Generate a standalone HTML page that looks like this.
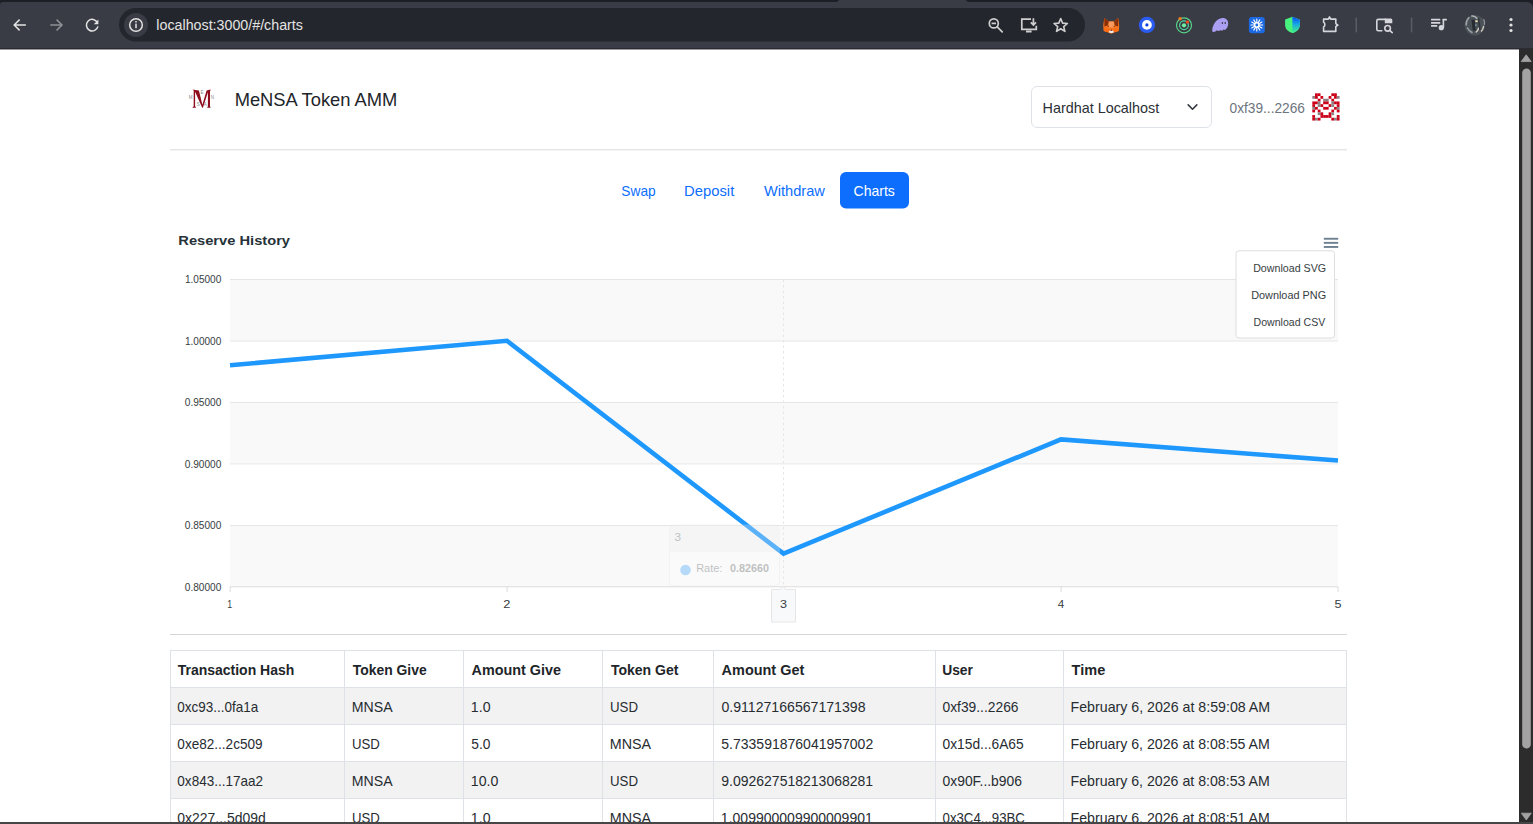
<!DOCTYPE html>
<html><head><meta charset="utf-8">
<style>
*{margin:0;padding:0;box-sizing:border-box}
html,body{width:1533px;height:824px;overflow:hidden;background:#fff;font-family:"Liberation Sans",sans-serif}
svg{position:absolute;left:0;top:0;display:block}
text{font-family:"Liberation Sans",sans-serif}
</style></head><body>
<svg width="1533" height="824" viewBox="0 0 1533 824">
<!-- ===== page ===== -->
<!-- logo -->
<path d="M192.3 89.5L198.9 90.6L202.4 104.8L206.6 90.6L210.5 89.5L210.5 90.6L210 91L210 106.4L210.6 107.2L210.6 107.8L207.2 107.8L207.2 107.2L207.9 106.4L207.9 92.3L202.9 107.8L202.2 107.8L195.1 91.8L195.1 106.3L195.9 107.2L195.9 107.8L192.6 107.8L192.6 107.2L193.7 106.3L193.7 90.6Z" fill="#8e0c1e"/>
<g style="font-family:'Liberation Serif',serif" font-size="4.5" fill="#8a8a8a">
 <text x="188.8" y="98.5">M</text><text x="200.6" y="94">E</text><text x="210.8" y="98.5">N</text><text x="196.8" y="106.3">S</text><text x="203.8" y="106.3">A</text>
</g>
<!-- select -->
<rect x="1031.5" y="86.5" width="180" height="41" rx="5.5" fill="#fff" stroke="#dee2e6"/>
<path d="M1188.2 104.9l4.3 4.3 4.3-4.3" stroke="#343a40" stroke-width="1.6" fill="none" stroke-linecap="round" stroke-linejoin="round"/>
<rect x="1315.02" y="93.30" width="2.77" height="2.77" fill="#cc0018"/>
<rect x="1317.74" y="93.30" width="2.77" height="2.77" fill="#cc0018"/>
<rect x="1331.34" y="93.30" width="2.77" height="2.77" fill="#cc0018"/>
<rect x="1334.06" y="93.30" width="2.77" height="2.77" fill="#cc0018"/>
<rect x="1312.30" y="96.02" width="2.77" height="2.77" fill="#8e7f82"/>
<rect x="1315.02" y="96.02" width="2.77" height="2.77" fill="#cc0018"/>
<rect x="1320.46" y="96.02" width="2.77" height="2.77" fill="#cc0018"/>
<rect x="1328.62" y="96.02" width="2.77" height="2.77" fill="#cc0018"/>
<rect x="1334.06" y="96.02" width="2.77" height="2.77" fill="#cc0018"/>
<rect x="1336.78" y="96.02" width="2.77" height="2.77" fill="#8e7f82"/>
<rect x="1317.74" y="98.74" width="2.77" height="2.77" fill="#cc0018"/>
<rect x="1323.18" y="98.74" width="2.77" height="2.77" fill="#8e7f82"/>
<rect x="1325.90" y="98.74" width="2.77" height="2.77" fill="#8e7f82"/>
<rect x="1331.34" y="98.74" width="2.77" height="2.77" fill="#cc0018"/>
<rect x="1312.30" y="101.46" width="2.77" height="2.77" fill="#cc0018"/>
<rect x="1315.02" y="101.46" width="2.77" height="2.77" fill="#cc0018"/>
<rect x="1317.74" y="101.46" width="2.77" height="2.77" fill="#8e7f82"/>
<rect x="1323.18" y="101.46" width="2.77" height="2.77" fill="#cc0018"/>
<rect x="1325.90" y="101.46" width="2.77" height="2.77" fill="#cc0018"/>
<rect x="1331.34" y="101.46" width="2.77" height="2.77" fill="#8e7f82"/>
<rect x="1334.06" y="101.46" width="2.77" height="2.77" fill="#cc0018"/>
<rect x="1336.78" y="101.46" width="2.77" height="2.77" fill="#cc0018"/>
<rect x="1312.30" y="104.18" width="2.77" height="2.77" fill="#cc0018"/>
<rect x="1317.74" y="104.18" width="2.77" height="2.77" fill="#8e7f82"/>
<rect x="1320.46" y="104.18" width="2.77" height="2.77" fill="#cc0018"/>
<rect x="1328.62" y="104.18" width="2.77" height="2.77" fill="#cc0018"/>
<rect x="1331.34" y="104.18" width="2.77" height="2.77" fill="#8e7f82"/>
<rect x="1336.78" y="104.18" width="2.77" height="2.77" fill="#cc0018"/>
<rect x="1312.30" y="106.90" width="2.77" height="2.77" fill="#8e7f82"/>
<rect x="1315.02" y="106.90" width="2.77" height="2.77" fill="#cc0018"/>
<rect x="1323.18" y="106.90" width="2.77" height="2.77" fill="#cc0018"/>
<rect x="1325.90" y="106.90" width="2.77" height="2.77" fill="#cc0018"/>
<rect x="1334.06" y="106.90" width="2.77" height="2.77" fill="#cc0018"/>
<rect x="1336.78" y="106.90" width="2.77" height="2.77" fill="#8e7f82"/>
<rect x="1312.30" y="109.62" width="2.77" height="2.77" fill="#cc0018"/>
<rect x="1317.74" y="109.62" width="2.77" height="2.77" fill="#cc0018"/>
<rect x="1331.34" y="109.62" width="2.77" height="2.77" fill="#cc0018"/>
<rect x="1336.78" y="109.62" width="2.77" height="2.77" fill="#cc0018"/>
<rect x="1317.74" y="112.34" width="2.77" height="2.77" fill="#8e7f82"/>
<rect x="1320.46" y="112.34" width="2.77" height="2.77" fill="#cc0018"/>
<rect x="1328.62" y="112.34" width="2.77" height="2.77" fill="#cc0018"/>
<rect x="1331.34" y="112.34" width="2.77" height="2.77" fill="#8e7f82"/>
<rect x="1312.30" y="115.06" width="2.77" height="2.77" fill="#cc0018"/>
<rect x="1320.46" y="115.06" width="2.77" height="2.77" fill="#cc0018"/>
<rect x="1323.18" y="115.06" width="2.77" height="2.77" fill="#cc0018"/>
<rect x="1325.90" y="115.06" width="2.77" height="2.77" fill="#cc0018"/>
<rect x="1328.62" y="115.06" width="2.77" height="2.77" fill="#cc0018"/>
<rect x="1336.78" y="115.06" width="2.77" height="2.77" fill="#cc0018"/>
<rect x="1312.30" y="117.78" width="2.77" height="2.77" fill="#cc0018"/>
<rect x="1315.02" y="117.78" width="2.77" height="2.77" fill="#8e7f82"/>
<rect x="1317.74" y="117.78" width="2.77" height="2.77" fill="#cc0018"/>
<rect x="1331.34" y="117.78" width="2.77" height="2.77" fill="#cc0018"/>
<rect x="1334.06" y="117.78" width="2.77" height="2.77" fill="#8e7f82"/>
<rect x="1336.78" y="117.78" width="2.77" height="2.77" fill="#cc0018"/>
<rect x="170" y="149.3" width="1177" height="1" fill="#d9dbdb"/>
<!-- charts button -->
<rect x="840" y="172" width="69" height="36.5" rx="6" fill="#0d6efd"/>

<!-- chart bands -->
<rect x="230" y="279.3" width="1108" height="61.5" fill="#f9f9f9"/>
<rect x="230" y="402.3" width="1108" height="61.4" fill="#f9f9f9"/>
<rect x="230" y="525.2" width="1108" height="61.5" fill="#f9f9f9"/>
<g fill="#e6e6e6">
 <rect x="230" y="279" width="1108" height="1"/>
 <rect x="230" y="340.5" width="1108" height="1"/>
 <rect x="230" y="402" width="1108" height="1"/>
 <rect x="230" y="463.4" width="1108" height="1"/>
 <rect x="230" y="525" width="1108" height="1"/>
</g>
<rect x="230" y="586.3" width="1108" height="1" fill="#dcdcdc"/>
<g fill="#dcdcdc">
 <rect x="229.6" y="586.5" width="1" height="5.5"/>
 <rect x="506.6" y="586.5" width="1" height="5.5"/>
 <rect x="783" y="586.5" width="1" height="5.5"/>
 <rect x="1060.6" y="586.5" width="1" height="5.5"/>
 <rect x="1337.6" y="586.5" width="1" height="5.5"/>
</g>
<path d="M783.5 279.5V586" stroke="#e6e6e6" stroke-dasharray="2.5 3"/>
<polyline points="230,365.3 507,340.8 783.5,553.6 1061,439.4 1338,460.5" fill="none" stroke="#1e98fc" stroke-width="4.6" stroke-linejoin="miter"/>
<!-- tooltip -->
<g opacity="0.3">
<rect x="669.5" y="525" width="110" height="61" rx="5" fill="#fff" fill-opacity="0.96" stroke="#e3e3e3"/>
<path d="M670 552V530a4.5 4.5 0 0 1 4.5-4.5h100.5a4.5 4.5 0 0 1 4.5 4.5V552z" fill="#eceff1"/>
<circle cx="685.5" cy="570" r="5.3" fill="#1a93fb"/>
<text x="674.55" y="540.80" font-size="10.5" font-weight="normal" fill="#373d3f" textLength="6.54" lengthAdjust="spacingAndGlyphs">3</text>
<text x="696.17" y="572.20" font-size="10.5" font-weight="normal" fill="#373d3f" textLength="26.19" lengthAdjust="spacingAndGlyphs">Rate:</text>
<text x="730.09" y="572.20" font-size="10.5" font-weight="bold" fill="#373d3f" textLength="39.06" lengthAdjust="spacingAndGlyphs">0.82660</text>
</g>
<!-- x tooltip -->
<path d="M771.5 589.5h9l2.5-3.5l2.5 3.5h10v32.5h-24z" fill="#f8f9fa" stroke="#e6e6e6" stroke-linejoin="round"/>
<!-- menu icon -->
<g fill="#6e8192"><rect x="1323.8" y="237.8" width="14.4" height="1.9"/><rect x="1323.8" y="241.9" width="14.4" height="1.9"/><rect x="1323.8" y="246" width="14.4" height="1.9"/></g>
<!-- dropdown -->
<rect x="1236" y="250.8" width="98.5" height="87.2" rx="3" fill="#fff" stroke="#dedede"/>
<rect x="170" y="634" width="1177" height="1" fill="#d6d6d6"/>

<!-- table -->
<rect x="170.5" y="687.5" width="1175.5" height="37" fill="#f2f2f2"/>
<rect x="170.5" y="761.5" width="1175.5" height="37" fill="#f2f2f2"/>
<g fill="#dee2e6">
 <rect x="170" y="650" width="1177" height="1"/>
 <rect x="170" y="687" width="1177" height="1"/>
 <rect x="170" y="724" width="1177" height="1"/>
 <rect x="170" y="761" width="1177" height="1"/>
 <rect x="170" y="798" width="1177" height="1"/>
 <rect x="170" y="650" width="1" height="174"/>
 <rect x="344" y="650" width="1" height="174"/>
 <rect x="463" y="650" width="1" height="174"/>
 <rect x="602" y="650" width="1" height="174"/>
 <rect x="713" y="650" width="1" height="174"/>
 <rect x="935" y="650" width="1" height="174"/>
 <rect x="1063" y="650" width="1" height="174"/>
 <rect x="1346" y="650" width="1" height="174"/>
</g>

<text x="234.63" y="106.20" font-size="18.5" font-weight="normal" fill="#212529" textLength="162.74" lengthAdjust="spacingAndGlyphs">MeNSA Token AMM</text>
<text x="1042.55" y="113.00" font-size="15" font-weight="normal" fill="#2b3035" textLength="116.61" lengthAdjust="spacingAndGlyphs">Hardhat Localhost</text>
<text x="1229.54" y="112.60" font-size="15" font-weight="normal" fill="#6c757d" textLength="75.44" lengthAdjust="spacingAndGlyphs">0xf39...2266</text>
<text x="621.35" y="196.00" font-size="15" font-weight="normal" fill="#0d6efd" textLength="34.35" lengthAdjust="spacingAndGlyphs">Swap</text>
<text x="684.12" y="196.00" font-size="15" font-weight="normal" fill="#0d6efd" textLength="50.15" lengthAdjust="spacingAndGlyphs">Deposit</text>
<text x="763.90" y="196.00" font-size="15" font-weight="normal" fill="#0d6efd" textLength="60.93" lengthAdjust="spacingAndGlyphs">Withdraw</text>
<text x="853.55" y="195.80" font-size="15" font-weight="normal" fill="#ffffff" textLength="41.32" lengthAdjust="spacingAndGlyphs">Charts</text>
<text x="178.32" y="245.40" font-size="13.5" font-weight="bold" fill="#263238" textLength="111.69" lengthAdjust="spacingAndGlyphs">Reserve History</text>
<text x="184.93" y="283.20" font-size="10.5" font-weight="normal" fill="#373d3f" textLength="36.39" lengthAdjust="spacingAndGlyphs">1.05000</text>
<text x="184.93" y="344.70" font-size="10.5" font-weight="normal" fill="#373d3f" textLength="36.39" lengthAdjust="spacingAndGlyphs">1.00000</text>
<text x="184.82" y="406.20" font-size="10.5" font-weight="normal" fill="#373d3f" textLength="36.51" lengthAdjust="spacingAndGlyphs">0.95000</text>
<text x="184.82" y="467.60" font-size="10.5" font-weight="normal" fill="#373d3f" textLength="36.51" lengthAdjust="spacingAndGlyphs">0.90000</text>
<text x="184.82" y="529.10" font-size="10.5" font-weight="normal" fill="#373d3f" textLength="36.51" lengthAdjust="spacingAndGlyphs">0.85000</text>
<text x="184.82" y="590.60" font-size="10.5" font-weight="normal" fill="#373d3f" textLength="36.51" lengthAdjust="spacingAndGlyphs">0.80000</text>
<text x="227.37" y="607.90" font-size="10.5" font-weight="normal" fill="#373d3f" textLength="4.95" lengthAdjust="spacingAndGlyphs">1</text>
<text x="503.39" y="607.90" font-size="10.5" font-weight="normal" fill="#373d3f" textLength="7.15" lengthAdjust="spacingAndGlyphs">2</text>
<text x="780.02" y="607.90" font-size="10.5" font-weight="normal" fill="#373d3f" textLength="7.01" lengthAdjust="spacingAndGlyphs">3</text>
<text x="1057.78" y="607.90" font-size="10.5" font-weight="normal" fill="#373d3f" textLength="6.49" lengthAdjust="spacingAndGlyphs">4</text>
<text x="1334.52" y="607.90" font-size="10.5" font-weight="normal" fill="#373d3f" textLength="7.01" lengthAdjust="spacingAndGlyphs">5</text>
<text x="1253.17" y="271.90" font-size="11.5" font-weight="normal" fill="#373d3f" textLength="72.92" lengthAdjust="spacingAndGlyphs">Download SVG</text>
<text x="1251.15" y="299.00" font-size="11.5" font-weight="normal" fill="#373d3f" textLength="74.95" lengthAdjust="spacingAndGlyphs">Download PNG</text>
<text x="1253.57" y="326.30" font-size="11.5" font-weight="normal" fill="#373d3f" textLength="71.70" lengthAdjust="spacingAndGlyphs">Download CSV</text>
<text x="177.71" y="675.00" font-size="15" font-weight="bold" fill="#212529" textLength="116.60" lengthAdjust="spacingAndGlyphs">Transaction Hash</text>
<text x="352.81" y="675.00" font-size="15" font-weight="bold" fill="#212529" textLength="73.90" lengthAdjust="spacingAndGlyphs">Token Give</text>
<text x="471.61" y="675.00" font-size="15" font-weight="bold" fill="#212529" textLength="89.41" lengthAdjust="spacingAndGlyphs">Amount Give</text>
<text x="610.91" y="675.00" font-size="15" font-weight="bold" fill="#212529" textLength="67.58" lengthAdjust="spacingAndGlyphs">Token Get</text>
<text x="721.61" y="675.00" font-size="15" font-weight="bold" fill="#212529" textLength="82.68" lengthAdjust="spacingAndGlyphs">Amount Get</text>
<text x="942.17" y="675.00" font-size="15" font-weight="bold" fill="#212529" textLength="30.76" lengthAdjust="spacingAndGlyphs">User</text>
<text x="1071.60" y="675.00" font-size="15" font-weight="bold" fill="#212529" textLength="33.62" lengthAdjust="spacingAndGlyphs">Time</text>
<text x="177.35" y="711.50" font-size="15" font-weight="normal" fill="#272c31" textLength="80.90" lengthAdjust="spacingAndGlyphs">0xc93...0fa1a</text>
<text x="351.77" y="711.50" font-size="15" font-weight="normal" fill="#272c31" textLength="40.84" lengthAdjust="spacingAndGlyphs">MNSA</text>
<text x="470.86" y="711.50" font-size="15" font-weight="normal" fill="#272c31" textLength="19.65" lengthAdjust="spacingAndGlyphs">1.0</text>
<text x="610.03" y="711.50" font-size="15" font-weight="normal" fill="#272c31" textLength="28.03" lengthAdjust="spacingAndGlyphs">USD</text>
<text x="721.43" y="711.50" font-size="15" font-weight="normal" fill="#272c31" textLength="144.07" lengthAdjust="spacingAndGlyphs">0.91127166567171398</text>
<text x="942.54" y="711.50" font-size="15" font-weight="normal" fill="#272c31" textLength="75.95" lengthAdjust="spacingAndGlyphs">0xf39...2266</text>
<text x="1070.57" y="711.50" font-size="15" font-weight="normal" fill="#272c31" textLength="199.56" lengthAdjust="spacingAndGlyphs">February 6, 2026 at 8:59:08 AM</text>
<text x="177.35" y="748.60" font-size="15" font-weight="normal" fill="#272c31" textLength="85.23" lengthAdjust="spacingAndGlyphs">0xe82...2c509</text>
<text x="351.93" y="748.60" font-size="15" font-weight="normal" fill="#272c31" textLength="27.82" lengthAdjust="spacingAndGlyphs">USD</text>
<text x="471.35" y="748.60" font-size="15" font-weight="normal" fill="#272c31" textLength="19.15" lengthAdjust="spacingAndGlyphs">5.0</text>
<text x="609.86" y="748.60" font-size="15" font-weight="normal" fill="#272c31" textLength="41.25" lengthAdjust="spacingAndGlyphs">MNSA</text>
<text x="721.34" y="748.60" font-size="15" font-weight="normal" fill="#272c31" textLength="151.85" lengthAdjust="spacingAndGlyphs">5.733591876041957002</text>
<text x="942.54" y="748.60" font-size="15" font-weight="normal" fill="#272c31" textLength="81.16" lengthAdjust="spacingAndGlyphs">0x15d...6A65</text>
<text x="1070.57" y="748.60" font-size="15" font-weight="normal" fill="#272c31" textLength="199.25" lengthAdjust="spacingAndGlyphs">February 6, 2026 at 8:08:55 AM</text>
<text x="177.35" y="785.70" font-size="15" font-weight="normal" fill="#272c31" textLength="85.72" lengthAdjust="spacingAndGlyphs">0x843...17aa2</text>
<text x="351.77" y="785.70" font-size="15" font-weight="normal" fill="#272c31" textLength="40.84" lengthAdjust="spacingAndGlyphs">MNSA</text>
<text x="470.86" y="785.70" font-size="15" font-weight="normal" fill="#272c31" textLength="27.55" lengthAdjust="spacingAndGlyphs">10.0</text>
<text x="610.03" y="785.70" font-size="15" font-weight="normal" fill="#272c31" textLength="28.03" lengthAdjust="spacingAndGlyphs">USD</text>
<text x="721.25" y="785.70" font-size="15" font-weight="normal" fill="#272c31" textLength="151.85" lengthAdjust="spacingAndGlyphs">9.092627518213068281</text>
<text x="942.54" y="785.70" font-size="15" font-weight="normal" fill="#272c31" textLength="79.46" lengthAdjust="spacingAndGlyphs">0x90F...b906</text>
<text x="1070.57" y="785.70" font-size="15" font-weight="normal" fill="#272c31" textLength="199.25" lengthAdjust="spacingAndGlyphs">February 6, 2026 at 8:08:53 AM</text>
<text x="177.33" y="822.80" font-size="15" font-weight="normal" fill="#272c31" textLength="88.44" lengthAdjust="spacingAndGlyphs">0x227...5d09d</text>
<text x="351.93" y="822.80" font-size="15" font-weight="normal" fill="#272c31" textLength="27.82" lengthAdjust="spacingAndGlyphs">USD</text>
<text x="470.86" y="822.80" font-size="15" font-weight="normal" fill="#272c31" textLength="19.65" lengthAdjust="spacingAndGlyphs">1.0</text>
<text x="609.86" y="822.80" font-size="15" font-weight="normal" fill="#272c31" textLength="41.25" lengthAdjust="spacingAndGlyphs">MNSA</text>
<text x="720.87" y="822.80" font-size="15" font-weight="normal" fill="#272c31" textLength="151.93" lengthAdjust="spacingAndGlyphs">1.009900009900009901</text>
<text x="942.56" y="822.80" font-size="15" font-weight="normal" fill="#272c31" textLength="82.31" lengthAdjust="spacingAndGlyphs">0x3C4...93BC</text>
<text x="1070.57" y="822.80" font-size="15" font-weight="normal" fill="#272c31" textLength="199.25" lengthAdjust="spacingAndGlyphs">February 6, 2026 at 8:08:51 AM</text>

<!-- ===== scrollbar ===== -->
<rect x="1519" y="49" width="14" height="775" fill="#2c2c2c"/>
<path d="M1521.2 61.6h10l-5-6.8z" fill="#a3a3a3" stroke="#a3a3a3" stroke-width="0.8" stroke-linejoin="round"/>
<rect x="1522.2" y="68.5" width="8.6" height="680" rx="4.3" fill="#a3a3a3"/>
<path d="M1521.3 813.2h10l-5 6.8z" fill="#a3a3a3" stroke="#a3a3a3" stroke-width="0.8" stroke-linejoin="round"/>

<!-- ===== browser chrome ===== -->
<rect x="0" y="0" width="1533" height="49" fill="#1d1f26"/>
<path d="M0 5a3 3 0 0 1 3-3H1527a6 6 0 0 1 6 6V48H0z" fill="#3a3c45"/>
<path d="M836 2a3 3 0 0 0 3-2H966a3 3 0 0 0 3 2z" fill="#3a3c45"/>
<rect x="0" y="48" width="1533" height="1" fill="#2a2c31"/>
<rect x="0" y="49" width="1519" height="1" fill="#9a9a9a"/>
<rect x="119" y="8" width="966" height="33.5" rx="16.75" fill="#24262d"/>
<circle cx="136" cy="25" r="12" fill="#3a3c45"/>
<g stroke="#e3e3e3" fill="none">
 <circle cx="136" cy="25" r="6.3" stroke-width="1.5"/>
</g>
<rect x="135.25" y="23.6" width="1.5" height="4.6" fill="#e3e3e3"/>
<rect x="135.25" y="21" width="1.5" height="1.5" fill="#e3e3e3"/>
<text x="156.38" y="30.30" font-size="14" font-weight="normal" fill="#e3e3e3" textLength="146.52" lengthAdjust="spacingAndGlyphs">localhost:3000/#/charts</text>
<!-- nav icons -->
<g stroke="#e3e3e3" stroke-width="1.5" fill="none">
 <path d="M25.9 25H14.2M19.6 19.6L14.2 25l5.4 5.4"/>
</g>
<g stroke="#8e9095" stroke-width="1.5" fill="none">
 <path d="M50.3 25H62M56.6 19.6L62 25l-5.4 5.4"/>
</g>
<g stroke="#e3e3e3" stroke-width="1.7" fill="none">
 <path d="M97.4 22.6A5.8 5.8 0 1 0 97.9 26.3" stroke-width="1.5"/>
</g>
<path d="M98.4 19.6v4.6h-4.6z" fill="#e3e3e3"/>
<!-- omnibox right icons -->
<g stroke="#cfcfcf" stroke-width="1.7" fill="none">
 <circle cx="993.8" cy="23.4" r="4.5"/>
 <path d="M997.2 26.8l5 5" stroke-linecap="round"/>
 <path d="M991.6 23.4h4.4"/>
 <path d="M1031 19.1h-9.2v10.3h14.5v-3.6"/>
 <path d="M1033.4 18.3v6.5M1030.8 22.4l2.6 2.6 2.6-2.6"/>
 <path d="M1026 31.5h5.6" stroke-width="2"/>
 <path d="M1060.7 18.5l1.9 4.6 4.8.4-3.7 3.1 1.2 4.8-4.2-2.6-4.2 2.6 1.2-4.8-3.7-3.1 4.8-.4z" stroke-linejoin="round" stroke-width="1.6"/>
</g>
<!-- extensions -->
<g>
 <!-- metamask fox -->
 <path d="M1104.3 18l4.4 3.6h5.2l4.4-3.6l0.9 7.5l-0.4 5.5l-3.8 1.2l-3.8 1.6l-3.8-1.6l-3.8-1.2l-0.4-5.5z" fill="#f5731d"/>
 <path d="M1104.3 18l4.4 3.6l-1 3.8l-3.3 1.2z M1118.3 18l-4.4 3.6l1 3.8l3.3 1.2z" fill="#8a2f08"/>
 <path d="M1109 21.6h4.8l0.6 6h-6z" fill="#f99a5c"/>
 <path d="M1103.8 28l3.6 0.5l1.4 1.8l2.5-0.5l2.5 0.5l1.4-1.8l3.6-0.5l-0.4 3l-3.8 1.2h-6.6l-3.8-1.2z" fill="#ff6b12"/>
 <path d="M1108.8 31l2.5-0.8l2.5 0.8l-0.8 2h-3.4z" fill="#e8e8ea"/>
 <circle cx="1111.3" cy="30.3" r="0.7" fill="#6b2a10"/>
 <circle cx="1108.3" cy="26.3" r="0.8" fill="#9a3a0a"/><circle cx="1114.3" cy="26.3" r="0.8" fill="#9a3a0a"/>
 <!-- blue target -->
 <circle cx="1146.9" cy="24.9" r="8.1" fill="#2a5cf2"/>
 <circle cx="1146.9" cy="24.9" r="4.9" fill="#fff"/>
 <circle cx="1146.9" cy="24.9" r="1.6" fill="#0b3fe6"/>
 <!-- green orbit -->
 <circle cx="1184" cy="25.3" r="7.5" fill="none" stroke="#58d488" stroke-width="1.2"/>
 <circle cx="1184" cy="25.3" r="4.4" fill="none" stroke="#52d39a" stroke-width="1.2"/>
 <circle cx="1184" cy="25.3" r="2.1" fill="#6ff0a0"/>
 <circle cx="1180.1" cy="18.8" r="1.7" fill="#f57a1f"/>
 <circle cx="1187.4" cy="22.1" r="1.7" fill="#f0451f"/>
 <!-- ghost -->
 <path d="M1212.3 31.5C1211.5 27 1216 18 1222.5 18C1226.5 18 1228.3 20.5 1228.2 23.5C1228.1 26.5 1227 28.5 1225.5 29.5C1224.8 30.2 1224 30 1223.5 29.5C1222.8 30.8 1221.5 31 1220.5 30C1219.6 31.2 1218 31.5 1217 30.3C1216 31.5 1213.2 32.5 1212.3 31.5Z" fill="#ab9ff2"/>
 <ellipse cx="1222.4" cy="23" rx="0.75" ry="1.1" fill="#3a3c45"/><ellipse cx="1225.2" cy="23" rx="0.75" ry="1.1" fill="#3a3c45"/>
 <!-- blue square with snowflake -->
 <rect x="1248.9" y="16.9" width="15.9" height="16.3" rx="3" fill="#1c6ae3"/>
 <g stroke="#fff" stroke-width="1.1" stroke-linecap="round"><path d="M1256.8 19.1v11.8M1250.9 25h11.8M1251.7 22l10.2 6M1251.7 28l10.2-6M1253.8 19.9l6 10.2M1259.8 19.9l-6 10.2"/></g>
 <circle cx="1256.8" cy="25" r="2.8" fill="#fff"/><circle cx="1256.8" cy="25" r="1.4" fill="#1c6ae3"/>
 <!-- shield -->
 <defs><linearGradient id="sh" x1="0" y1="0" x2="0" y2="1"><stop offset="0" stop-color="#0b45f0"/><stop offset="0.45" stop-color="#16a6e6"/><stop offset="1" stop-color="#45f27f"/></linearGradient></defs>
 <path d="M1292.4 16.8l7.4 2.6v5.4c0 4.4-3 7-7.4 8.2c-4.4-1.2-7.3-3.8-7.3-8.2v-5.4z" fill="#47f27f"/>
 <path d="M1292.4 16.8l7.4 2.6v5.4c0 4.4-3 7-7.4 8.2z" fill="url(#sh)"/>
 <!-- puzzle -->
 <path d="M1323.6 19.1H1328.2L1329.5 17L1330.8 19.1H1335.8V23.6L1337.8 25.1L1335.8 26.6V31.4H1323.6V27C1325.3 26.2 1325.3 23 1323.6 22.3Z" fill="none" stroke="#d5d5dc" stroke-width="1.6" stroke-linejoin="round"/>
 <path d="M1328 19.3L1329.5 16.2L1331 19.3z M1336 23.4L1338.6 25.1L1336 26.8z" fill="#d5d5dc"/>
 <rect x="1355.5" y="17.5" width="1.5" height="15" rx="0.7" fill="#5a5d66"/>
 <!-- tab search -->
 <path d="M1382.4 30.8H1378.3a1.5 1.5 0 0 1-1.5-1.5V20.9a1.5 1.5 0 0 1 1.5-1.5H1386" fill="none" stroke="#d5d5dc" stroke-width="1.6"/>
 <path d="M1384.8 18.6H1390.8a1.5 1.5 0 0 1 1.5 1.5V23.3H1384.8z" fill="#d5d5dc"/>
 <circle cx="1387.6" cy="28.3" r="2.8" fill="none" stroke="#d5d5dc" stroke-width="1.6"/>
 <path d="M1389.7 30.4l2.5 2.3" stroke="#d5d5dc" stroke-width="1.6" stroke-linecap="round"/>
 <rect x="1410.8" y="17.5" width="1.5" height="15" rx="0.7" fill="#5a5d66"/>
 <!-- media -->
 <g fill="#d5d5dc"><rect x="1431" y="18.8" width="9.3" height="1.6" rx="0.5"/><rect x="1431" y="22.1" width="9.3" height="1.6" rx="0.5"/><rect x="1431" y="25.1" width="6.3" height="1.6" rx="0.5"/><rect x="1442.6" y="19" width="1.6" height="8.8"/><rect x="1442.6" y="18.8" width="4.3" height="1.7" rx="0.5"/><circle cx="1441.3" cy="27.7" r="2.6"/></g>
 <!-- avatar -->
 <circle cx="1474.8" cy="25.3" r="10.3" fill="#4a5157"/>
 <path d="M1469 17.5c-2 2-3 4.5-2.8 7.5M1467.5 28c1 2 2.5 3.5 4.5 4.5" stroke="#9aa0a5" stroke-width="1.6" fill="none" stroke-linecap="round"/>
 <path d="M1471.8 16c2-0.3 4 0.8 5.3 2.5" stroke="#b0b4b6" stroke-width="1.5" fill="none" stroke-linecap="round"/>
 <path d="M1476.2 32c1.2-1 2-2.3 2.4-3.8M1481.5 31c1.2-1.3 1.8-2.8 2-4.5" stroke="#d6d0c6" stroke-width="1.4" fill="none" stroke-linecap="round"/>
 <path d="M1483.8 19.5c0.7 1.5 0.9 3.2 0.6 4.8" stroke="#8d9397" stroke-width="1.3" fill="none" stroke-linecap="round"/>
 <path d="M1471.5 19.5l3.2 0.5l1 11l-3-0.8z" fill="#262c31"/>
 <path d="M1478.5 18l1.5 12" stroke="#30363b" stroke-width="1.5"/>
 <rect x="1475.3" y="20.3" width="2.4" height="1.8" fill="#e8ddb2"/>
 <rect x="1475.2" y="24.2" width="1.3" height="2" fill="#7a96ac"/>
 <!-- menu -->
 <g fill="#e3e3e3"><circle cx="1511" cy="19.5" r="1.6"/><circle cx="1511" cy="25" r="1.6"/><circle cx="1511" cy="30.5" r="1.6"/></g>
</g>
<rect x="0" y="822" width="1533" height="2" fill="#464646"/>
</svg>
</body></html>
